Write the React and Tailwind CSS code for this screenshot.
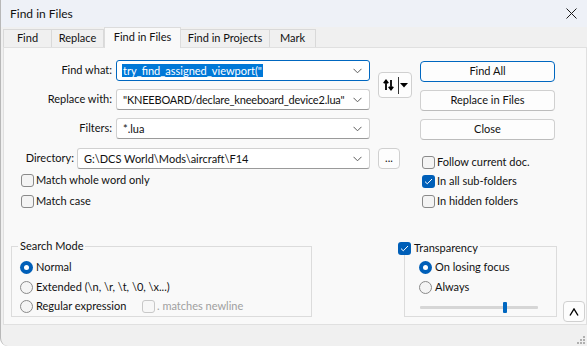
import React from "react";

const font = { fontFamily: "Lato, 'Liberation Sans', sans-serif" };

function Chevron() {
  return (
    <svg width="9" height="6" viewBox="0 0 9 6" className="shrink-0">
      <path d="M0.5 0.8 L4.5 4.8 L8.5 0.8" fill="none" stroke="#5c5c5c" strokeWidth="1" />
    </svg>
  );
}

function Combo({ w, focus, children }) {
  return (
    <div
      className={`h-[21px] flex items-center justify-between bg-white rounded-[3px] border pl-[5px] pr-[7px] overflow-hidden ${
        focus ? "border-[#0067c0]" : "border-[#d0d0d0] border-b-[#9a9a9a]"
      } ${w}`}
    >
      <div className="text-[11px] text-[#111] whitespace-nowrap leading-none flex items-center">{children}</div>
      <Chevron />
    </div>
  );
}

function Check({ checked, disabled }) {
  if (checked)
    return (
      <div className="w-[13px] h-[13px] rounded-[3px] bg-[#005fb8] flex items-center justify-center shrink-0">
        <svg width="9" height="7" viewBox="0 0 9 7">
          <path d="M1 3.6 L3.3 5.8 L8 1" fill="none" stroke="#fff" strokeWidth="1" />
        </svg>
      </div>
    );
  return (
    <div
      className={`w-[13px] h-[13px] rounded-[3px] border shrink-0 ${
        disabled ? "border-[#c8c8c8] bg-[#f7f7f7]" : "border-[#8a8a8a] bg-[#f4f4f4]"
      }`}
    />
  );
}

function Radio({ on }) {
  if (on)
    return (
      <div className="w-[13px] h-[13px] rounded-full bg-[#005fb8] flex items-center justify-center shrink-0">
        <div className="w-[5px] h-[5px] rounded-full bg-white" />
      </div>
    );
  return <div className="w-[13px] h-[13px] rounded-full border border-[#8a8a8a] bg-[#f4f4f4] shrink-0" />;
}

function Btn({ children, def, cls }) {
  return (
    <div
      className={`h-[21px] w-[135px] rounded-[4px] border flex items-center justify-center text-[11px] text-[#111] bg-[#fdfdfd] ${
        def ? "border-[#0067c0]" : "border-[#d0d0d0] border-b-[#bcbcbc]"
      } ${cls || ""}`}
    >
      {children}
    </div>
  );
}

function Tab({ children, active, w }) {
  if (active)
    return (
      <div className={`h-[21px] ${w} -mb-px bg-[#f9f9f9] border border-b-0 border-[#dcdcdc] flex items-center justify-center text-[11px] text-[#111] relative z-10 pb-[2px]`}>
        {children}
      </div>
    );
  return (
    <div className={`h-[18px] ${w} bg-[#f0f0f0] border border-b-0 border-l-0 first:border-l border-[#d9d9d9] flex items-center justify-center text-[11px] text-[#111]`}>
      {children}
    </div>
  );
}

function Row({ cls, children, gap = "gap-[2px]" }) {
  return <div className={`h-[13px] flex items-center ${gap} text-[11px] text-[#111] ${cls || ""}`}>{children}</div>;
}

export default function App() {
  return (
    <div
      style={font}
      className="w-[587px] h-[346px] bg-[#f0f0f0] border-l border-[#b8b8b8] rounded-bl-[8px] overflow-hidden flex flex-col relative"
    >
      {/* title bar */}
      <div className="h-[27px] bg-[#eef1f7] flex items-center justify-between pl-[9px] pr-[8px] shrink-0">
        <span className="text-[12px] text-[#111]">Find in Files</span>
        <svg width="11" height="11" viewBox="0 0 11 11" className="mr-[2px]">
          <path d="M0.5 0.5 L10.5 10.5 M10.5 0.5 L0.5 10.5" stroke="#1a1a1a" strokeWidth="1" />
        </svg>
      </div>
      {/* tabs */}
      <div className="h-[20px] bg-[#f0f0f0] flex items-end pl-[2px] shrink-0">
        <Tab w="w-[49px]">Find</Tab>
        <Tab w="w-[52px]">Replace</Tab>
        <Tab active w="w-[77px]">Find in Files</Tab>
        <Tab w="w-[89px]">Find in Projects</Tab>
        <Tab w="w-[46px]">Mark</Tab>
      </div>
      {/* panel */}
      <div className="ml-[2px] w-[584px] h-[278px] border border-[#e0e0e0] bg-[#f9f9f9] shrink-0 flex flex-col">
        <div className="flex pt-[12px] h-[160px]">
          {/* col A */}
          <div className="w-[366px] flex flex-col">
            <div className="h-[21px] flex items-center gap-[4px]">
              <div className="w-[108px] text-right text-[11px] text-[#111]">Find what:</div>
              <Combo w="w-[254px]" focus>
                <span className="bg-[#0078d7] text-white px-[1px] py-[1px]">try_find_assigned_viewport("</span>
              </Combo>
            </div>
            <div className="h-[21px] mt-[8px] flex items-center gap-[4px]">
              <div className="w-[108px] text-right text-[11px] text-[#111]">Replace with:</div>
              <Combo w="w-[254px]">
                <span className="px-[1px] tracking-[-0.2px]">"KNEEBOARD/declare_kneeboard_device2.lua"</span>
              </Combo>
            </div>
            <div className="h-[21px] mt-[8px] flex items-center gap-[4px]">
              <div className="w-[108px] text-right text-[11px] text-[#111]">Filters:</div>
              <Combo w="w-[254px]">
                <span className="px-[1px]">*.lua</span>
              </Combo>
            </div>
            <div className="h-[21px] mt-[9px] flex items-center gap-[3px]">
              <div className="w-[70px] text-right text-[11px] text-[#111]">Directory:</div>
              <Combo w="w-[293px]">
                <span className="px-[1px]">G:\DCS World\Mods\aircraft\F14</span>
              </Combo>
            </div>
            <Row cls="mt-[5px] ml-[17px]">
              <Check />
              <span>Match whole word only</span>
            </Row>
            <Row cls="mt-[8px] ml-[17px]">
              <Check />
              <span>Match case</span>
            </Row>
          </div>
          {/* col B */}
          <div className="ml-[8px] w-[34px] flex flex-col">
            <div className="mt-[12px] h-[26px] w-[34px] rounded-[4px] border border-[#d0d0d0] bg-[#fdfdfd] flex items-center pl-[4px]">
              <svg width="11" height="12" viewBox="0 0 11 12">
                <path d="M3 11 V2 M0.8 4.2 L3 1.5 L5.2 4.2" fill="none" stroke="#000" strokeWidth="1.8" />
                <path d="M8 1 V10 M5.8 7.8 L8 10.5 L10.2 7.8" fill="none" stroke="#000" strokeWidth="1.8" />
              </svg>
              <div className="w-px h-[17px] bg-[#333] ml-[4px]" />
              <svg width="8" height="5" viewBox="0 0 8 5" className="ml-[1px]">
                <path d="M0 0 H8 L4 4.5 Z" fill="#000" />
              </svg>
            </div>
            <div className="mt-[50px] h-[21px] w-[22px] rounded-[4px] border border-[#d0d0d0] bg-[#fdfdfd] flex items-end justify-center text-[11px] text-[#111] leading-none pb-[5px]">
              ...
            </div>
          </div>
          {/* col C */}
          <div className="ml-[8px] w-[136px] flex flex-col">
            <Btn def cls="mt-[1px]">Find All</Btn>
            <Btn cls="mt-[8px]">Replace in Files</Btn>
            <Btn cls="mt-[8px]">Close</Btn>
            <Row cls="mt-[16px] ml-[2px]">
              <Check />
              <span>Follow current doc.</span>
            </Row>
            <Row cls="mt-[6px] ml-[2px]">
              <Check checked />
              <span>In all sub-folders</span>
            </Row>
            <Row cls="mt-[7px] ml-[2px]">
              <Check />
              <span>In hidden folders</span>
            </Row>
          </div>
        </div>
        {/* bottom groups */}
        <div className="flex mt-[38px]">
          <div className="relative ml-[7px] w-[301px] h-[71px] border border-[#dcdcdc] flex flex-col pl-[8px]">
            <div className="absolute left-[6px] top-[-9px] px-[2px] bg-[#f9f9f9] text-[11px] text-[#111] leading-[16px]">
              Search Mode
            </div>
            <Row cls="mt-[14px]" gap="gap-[3px]">
              <Radio on />
              <span>Normal</span>
            </Row>
            <Row cls="mt-[7px]" gap="gap-[3px]">
              <Radio />
              <span>Extended (\n, \r, \t, \0, \x...)</span>
            </Row>
            <Row cls="mt-[6px]" gap="gap-0">
              <Radio />
              <span className="ml-[3px] w-[106px]">Regular expression</span>
              <Check disabled />
              <span className="ml-[2px] text-[#a0a0a0]">. matches newline</span>
            </Row>
          </div>
          <div className="relative ml-[92px] w-[153px] h-[71px] border border-[#dcdcdc] flex flex-col pl-[14px]">
            <Row cls="absolute left-[-7px] top-[-5px] pr-[2px] bg-[#f9f9f9]" gap="gap-[3px]">
              <Check checked />
              <span>Transparency</span>
            </Row>
            <Row cls="mt-[14px]" gap="gap-[3px]">
              <Radio on />
              <span>On losing focus</span>
            </Row>
            <Row cls="mt-[7px]" gap="gap-[3px]">
              <Radio />
              <span>Always</span>
            </Row>
            <div className="relative mt-[8px] ml-[1px] w-[118px] h-[11px] flex items-center">
              <div className="w-full h-[3px] bg-[#d6d6d6] rounded-[1px]" />
              <div className="absolute left-[83px] top-0 w-[4px] h-[11px] bg-[#0067c0] rounded-[1px]" />
            </div>
          </div>
          <div className="ml-[6px] mt-[55px] w-[22px] h-[21px] rounded-[4px] border border-[#d0d0d0] bg-[#fdfdfd] flex items-center justify-center">
            <svg width="10" height="8" viewBox="0 0 10 8">
              <path d="M1 7.5 L5 1 L9 7.5" fill="none" stroke="#000" strokeWidth="1.4" />
            </svg>
          </div>
        </div>
      </div>
      {/* resize grip */}
      <svg width="10" height="10" viewBox="0 0 10 10" className="absolute right-[1px] bottom-[1px]">
        {[
          [8, 2], [8, 5], [5, 5], [8, 8], [5, 8], [2, 8],
        ].map(([x, y], i) => (
          <rect key={i} x={x - 1} y={y - 1} width="2" height="2" fill="#b0b0b0" />
        ))}
      </svg>
    </div>
  );
}
